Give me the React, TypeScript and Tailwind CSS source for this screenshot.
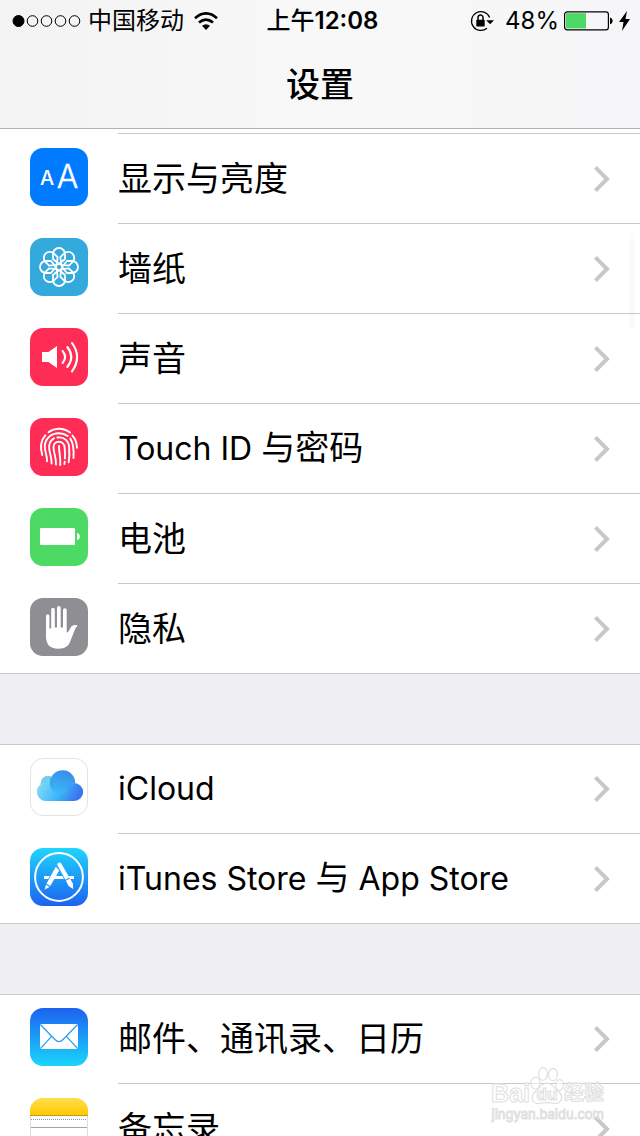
import type { ReactNode } from "react";

type Item = { label: string; icon: ReactNode };

const FONT = "font-['Inter','Noto_Sans_CJK_SC',sans-serif]";

function Tile({ fill, children }: { fill: string; children: ReactNode }) {
  return (
    <svg viewBox="0 0 58 58" className="size-[58px] shrink-0" aria-hidden="true">
      <defs>
        <linearGradient id="storeBlue" x1="0" y1="0" x2="0" y2="1">
          <stop offset="0" stopColor="#1fd5fd" />
          <stop offset="1" stopColor="#1d62f0" />
        </linearGradient>
        <linearGradient id="mailBlue" x1="0" y1="0" x2="0" y2="1">
          <stop offset="0" stopColor="#1d62f0" />
          <stop offset="1" stopColor="#1ad5fd" />
        </linearGradient>
      </defs>
      <rect width="58" height="58" rx="13" fill={fill} />
      {children}
    </svg>
  );
}

const DisplayIcon = () => (
  <Tile fill="#007aff">
    <g fill="#fff" fontFamily="Inter, sans-serif" textAnchor="middle">
      <text x="17" y="37" fontSize="20" fontWeight="500">A</text>
      <text x="37.5" y="40" fontSize="32" fontWeight="300" stroke="#fff" strokeWidth="0.4">A</text>
    </g>
  </Tile>
);

const WallpaperIcon = () => (
  <Tile fill="#34aadc">
    <g fill="none" stroke="#fff" strokeWidth="1.8">
      {[0, 45, 90, 135, 180, 225, 270, 315].map((a) => (
        <path key={a} transform={`rotate(${a} 29 29)`} d="M29 26 L23 21 V16 A6 6 0 0 1 35 16 V21 Z" />
      ))}
      <circle cx="29" cy="29" r="3.4" />
    </g>
  </Tile>
);

const SoundIcon = () => (
  <Tile fill="#ff2d55">
    <path fill="#fff" d="M12 24H18.5L27 18V40L18.5 34H12Z" />
    <g fill="none" stroke="#fff" strokeWidth="2.1" strokeLinecap="round">
      <path d="M32.6 23 Q37.6 29 32.6 35" />
      <path d="M37.3 19 Q45.3 29 37.3 39" />
      <path d="M42 15 Q52.2 29 42 43.4" />
    </g>
  </Tile>
);

const TouchIcon = () => (
  <Tile fill="#ff2d55">
    <g fill="none" stroke="#fff" strokeWidth="1.9" strokeLinecap="round">
      <path d="M18.5 14.2 C25 9.6 33.5 9.6 40 14.6" />
      <path d="M15.3 17.3 C10.2 23 10.2 30 12.2 37" />
      <path d="M42.4 17.6 C45.2 20.6 46.8 25 47 29.8" />
      <path d="M17 43.2 C17.4 37 14.4 34 14.8 27.5 C15.4 20.4 21.2 15.2 29 15.2 C32.4 15.2 35.4 16.3 37.8 18" />
      <path d="M40.3 20.6 C43.8 25.8 43.9 33 43.5 40" />
      <path d="M21.6 45.5 C22 38.5 18.8 34.5 19.1 28.4 C19.4 24.6 21 21.8 24 20.3" />
      <path d="M27.4 19.5 C34.6 18.6 39 23.4 39.1 29.5 C39.6 35 39.4 39.5 38.7 44.2" />
      <path d="M26 46.6 C26.4 39.5 23.4 34.5 23.5 29 C23.8 22 34 21.9 34.6 29.2 C35.1 33.6 35.2 37 34.9 40.5" />
      <path d="M30.2 47 C31 40 28.8 34.5 29 28" />
      <path d="M34.7 43.6 L34.4 46" />
    </g>
  </Tile>
);

const BatteryIcon = () => (
  <Tile fill="#4cd964">
    <rect x="10" y="20" width="35" height="17" rx="1" fill="#fff" />
    <path d="M47 25 C51 26 51 31 47 32Z" fill="#fff" />
  </Tile>
);

const PrivacyIcon = () => (
  <Tile fill="#8e8e93">
    <path
      fill="#fff"
      d="M16 18 a1.7 1.7 0 0 1 3.4 0 V30.5 H21.2 V11.5 a1.8 1.8 0 0 1 3.6 0 V29.5 H27 V9.8 a1.8 1.8 0 0 1 3.7 0 V29.5 H33 V12 a1.8 1.8 0 0 1 3.7 0 V34.5 C38.5 34.5 39.4 31.8 40.4 30 C42 27 44.5 26.6 47.3 27.4 C47.2 28.8 46 29.2 45.2 30.8 L40.8 42 C38.8 48 35.5 50.7 28.5 50.7 C19 50.7 16 45.5 16 38Z"
    />
  </Tile>
);

const CloudIcon = () => (
  <svg viewBox="0 0 58 58" className="size-[58px] shrink-0" aria-hidden="true">
    <defs>
      <linearGradient id="cloudBase" x1="0" y1="0" x2="1" y2="0.2">
        <stop offset="0" stopColor="#8edcf6" />
        <stop offset="0.55" stopColor="#3cb8fb" />
        <stop offset="1" stopColor="#3a74ee" />
      </linearGradient>
      <linearGradient id="cloudTop" x1="0.3" y1="1" x2="0.7" y2="0">
        <stop offset="0" stopColor="#3cb8fb" />
        <stop offset="1" stopColor="#398be6" />
      </linearGradient>
    </defs>
    <rect x="0.5" y="0.5" width="57" height="57" rx="12.5" fill="#fff" stroke="#e2e2e4" />
    <circle cx="18" cy="25.2" r="7.4" fill="#70cdf3" />
    <path fill="url(#cloudBase)" d="M14.4 43 A9.4 9.4 0 0 1 14.4 24.6 C20 24.8 24 28 29 30 C35 28 39 25.6 44.2 25 A9 9 0 0 1 44.2 43Z" />
    <path fill="url(#cloudTop)" d="M21 30 A12.7 12.7 0 1 1 45.3 25.2 C40 25.4 38 29 37 34 C31 37 23.5 35 21 30Z" />
    <path fill="#37a5ea" opacity="0.7" d="M20 22.8 C20.3 20.6 21.3 18.8 22.8 20 C25 22.5 25 27.5 21.8 30.2 C20.2 28.4 19.7 25 20 22.8Z" />
  </svg>
);

const AppStoreIcon = () => (
  <Tile fill="url(#storeBlue)">
    <circle cx="29" cy="29" r="23.9" fill="none" stroke="#fff" strokeWidth="2" />
    <g fill="#fff">
      <path d="M14 28H19.8L18.2 31H14ZM25.4 28H32.4L34 31H23.8ZM38.4 28H44V31H40Z" />
      <path d="M27.3 17 A2.2 2.2 0 0 1 31.2 15.4 L39.4 29.6 L35.4 31.8Z" />
      <path d="M35.9 32.8 L40 30.5 L43 35.8 L43.2 41 L38.8 38.2Z" />
      <path d="M25.8 18.8 L29.2 22.6 L20.3 38 L16.4 35.8Z" />
      <path d="M16 36.8 L19.6 38.9 L14.6 41.6Z" />
    </g>
  </Tile>
);

const MailIcon = () => (
  <Tile fill="url(#mailBlue)">
    <rect x="10" y="16" width="38" height="25" rx="1" fill="#fff" />
    <path fill="none" stroke="#2d9cf3" strokeWidth="1.3" d="M10.3 16.5 L25.2 31.7 Q29 35.6 32.8 31.7 L47.7 16.5 M10.3 40.6 L21.6 28.4 M47.7 40.6 L36.4 28.4" />
  </Tile>
);

const NotesIcon = () => (
  <svg viewBox="0 0 58 58" className="size-[58px] shrink-0" aria-hidden="true">
    <defs>
      <linearGradient id="notePad" x1="0" y1="0" x2="0" y2="1">
        <stop offset="0" stopColor="#ffde4c" />
        <stop offset="1" stopColor="#fec900" />
      </linearGradient>
    </defs>
    <rect x="0.5" y="0.5" width="57" height="57" rx="12.5" fill="#fff" stroke="#dedee0" />
    <path d="M0 17.5V13A13 13 0 0 1 13 0H45A13 13 0 0 1 58 13V17.5Z" fill="url(#notePad)" />
    <path d="M0 17.5H58" stroke="#c39b1c" />
    <path d="M1 21.5H57" stroke="#9a9a9a" strokeDasharray="1 1" />
    <path d="M1 29.5H57" stroke="#a5a5a5" />
  </svg>
);

const groups: Item[][] = [
  [
    { label: "显示与亮度", icon: <DisplayIcon /> },
    { label: "墙纸", icon: <WallpaperIcon /> },
    { label: "声音", icon: <SoundIcon /> },
    { label: "Touch ID 与密码", icon: <TouchIcon /> },
    { label: "电池", icon: <BatteryIcon /> },
    { label: "隐私", icon: <PrivacyIcon /> },
  ],
  [
    { label: "iCloud", icon: <CloudIcon /> },
    { label: "iTunes Store 与 App Store", icon: <AppStoreIcon /> },
  ],
  [
    { label: "邮件、通讯录、日历", icon: <MailIcon /> },
    { label: "备忘录", icon: <NotesIcon /> },
  ],
];

/* Latin runs are set slightly smaller so they balance with the Chinese glyphs. */
function Label({ text }: { text: string }) {
  const runs = text.match(/[\x20-\x7e]+|[^\x20-\x7e]+/g) ?? [];
  return (
    <span className="text-[34px] leading-[50px] whitespace-pre">
      {runs.map((run, i) =>
        /^[\x20-\x7e]/.test(run) ? (
          <span key={i} className="text-[32px]">{run}</span>
        ) : (
          run
        ),
      )}
    </span>
  );
}

function Row({ item, last }: { item: Item; last: boolean }) {
  return (
    <li className={last ? "border-b border-[#c8c7cc]" : ""}>
      <a href="#" className="flex items-start pl-[30px]">
        <span className="pt-[14px]">{item.icon}</span>
        <span
          className={`ml-[30px] flex flex-1 items-center justify-between pr-[30px] ${
            last ? "h-[89px]" : "h-[90px] border-b border-[#c8c7cc]"
          }`}
        >
          <Label text={item.label} />
          <svg viewBox="0 0 16 26" className="h-[26px] w-4 shrink-0" fill="none" stroke="#c7c7cc" strokeWidth="4" aria-hidden="true">
            <path d="M1.4 1.4 L13 13 L1.4 24.6" />
          </svg>
        </span>
      </a>
    </li>
  );
}

function StatusBar() {
  return (
    <div className="grid h-[42px] grid-cols-[1fr_auto_1fr] items-center pr-[10px] pl-3 text-[24px] leading-10">
      <div className="flex items-center">
        <svg viewBox="0 0 70 12" className="h-3 w-[70px]" fill="none" stroke="#000" aria-hidden="true">
          <circle cx="6.5" cy="6" r="5.5" fill="#000" />
          <circle cx="20.5" cy="6" r="5.3" />
          <circle cx="34.5" cy="6" r="5.3" />
          <circle cx="48.5" cy="6" r="5.3" />
          <circle cx="62.5" cy="6" r="5.3" />
        </svg>
        <span className="ml-[6px]">中国移动</span>
        <svg viewBox="0 0 24 18" className="ml-[10px] h-[18px] w-6" fill="none" stroke="#000" strokeWidth="2.7" aria-hidden="true">
          <path d="M1 6.2 Q12 -3.4 23 6.2" />
          <path d="M5 10.6 Q12 4.6 19 10.6" />
          <path d="M12 18 L8 13.8 Q12 10.6 16 13.8Z" fill="#000" stroke="none" />
        </svg>
      </div>
      <span className="pl-[3px] font-medium">
        上午<span className="font-semibold">12:08</span>
      </span>
      <div className="flex items-center justify-end">
        <svg viewBox="0 0 24 22" className="h-[22px] w-6" fill="none" stroke="#000" aria-hidden="true">
          <path strokeWidth="1.3" d="M19.6 7.4 A9.4 9.4 0 1 0 17 18.2" />
          <path fill="#000" stroke="none" d="M16.2 10.3H24L20.1 14.2Z" />
          <rect x="6.3" y="9.8" width="8.4" height="6.6" rx="0.6" fill="#000" stroke="none" />
          <path strokeWidth="1.5" d="M8 10.3V7.6A2.5 2.5 0 0 1 13 7.6V10.3" />
        </svg>
        <span className="ml-[11px]">48%</span>
        <svg viewBox="0 0 50 20" className="ml-[5px] h-5 w-[50px]" aria-hidden="true">
          <rect x="0.6" y="0.8" width="43.8" height="18" rx="2.6" fill="none" stroke="#000" strokeWidth="1.2" />
          <rect x="2" y="2.2" width="20" height="15.2" fill="#4cd964" />
          <path d="M46 6.5 C49.5 7 49.5 12.6 46 13.2Z" />
        </svg>
        <svg viewBox="0 0 11 20" className="ml-[5px] h-5 w-[11px]" aria-hidden="true">
          <path d="M8 0 L0 11 H4.5 L3 20 L11 8 H6.5Z" />
        </svg>
      </div>
    </div>
  );
}

function Watermark() {
  return (
    <div
      aria-hidden="true"
      className="pointer-events-none absolute right-9 bottom-[14px] flex flex-col items-end text-white/60 [-webkit-text-stroke:1px_#dfdfe1]"
    >
      <div className="flex h-10 items-end font-['Liberation_Sans','Noto_Sans_CJK_SC',sans-serif] leading-[26px] font-bold">
        <span className="text-[25px]">Bai</span>
        <svg viewBox="0 0 34 40" className="h-10 w-[34px]" fill="#fff" fillOpacity="0.6" stroke="#dfdfe1" strokeWidth="1.2">
          <ellipse cx="5.5" cy="17" rx="4.5" ry="6" />
          <ellipse cx="13" cy="8" rx="4.4" ry="6.4" />
          <ellipse cx="23" cy="8.6" rx="4.4" ry="6.2" />
          <ellipse cx="29.6" cy="19" rx="3.8" ry="5.4" />
          <path d="M17 17 C22 17 24 22 29 26 C34 31 31 38 25 37.5 C20 36.5 14 36.5 9 37.5 C2 38 0 31 5 26 C10 22 12 17 17 17Z" />
          <text x="17" y="34" fontSize="17" textAnchor="middle">du</text>
        </svg>
        <span className="text-[20px]">经验</span>
      </div>
      <span className="text-[13px] leading-4">jingyan.baidu.com</span>
    </div>
  );
}

export default function App() {
  return (
    <div className={`relative flex h-screen flex-col overflow-hidden bg-[#efeff4] text-black ${FONT}`}>
      <header className="shrink-0 border-b border-[#b2b2b2] bg-linear-to-r from-[#f3f3f4] via-[#f8f8f8] to-[#f6f6f8]">
        <StatusBar />
        <h1 className="h-[86px] text-center text-[34px] leading-[86px] font-medium">设置</h1>
      </header>
      <main className="min-h-0 flex-1 overflow-hidden">
        <div className="bg-white pt-1 pl-[118px]">
          <div className="h-px bg-[#c8c7cc]" />
        </div>
        <div className="flex flex-col gap-[70px]">
          {groups.map((items, g) => (
            <ul key={items[0].label} className={`bg-white ${g > 0 ? "shadow-[inset_0_1px_0_#c8c7cc]" : ""}`}>
              {items.map((item, i) => (
                <Row key={item.label} item={item} last={i === items.length - 1} />
              ))}
            </ul>
          ))}
        </div>
      </main>
      <div aria-hidden="true" className="pointer-events-none absolute top-[233px] right-[6px] h-24 w-1 rounded-full bg-black/2" />
      <Watermark />
    </div>
  );
}
